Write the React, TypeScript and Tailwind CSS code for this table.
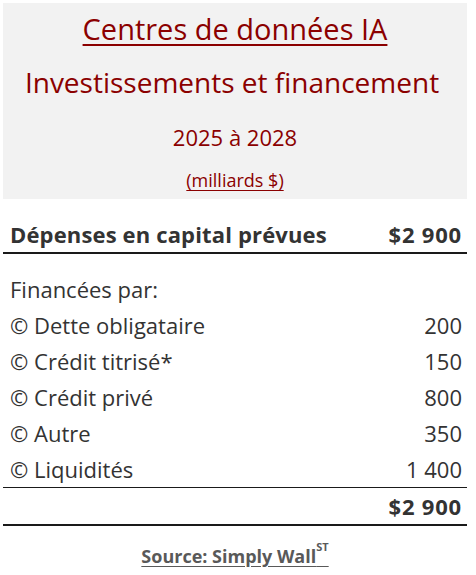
import React from 'react';

const rows = [
  { label: 'Dette obligataire', value: '200' },
  { label: 'Crédit titrisé*', value: '150' },
  { label: 'Crédit privé', value: '800' },
  { label: 'Autre', value: '350' },
  { label: 'Liquidités', value: '1 400' },
];

export default function App() {
  return (
    <div
      className="w-[476px] h-[575px] bg-white px-[3px] pt-[3px] text-[#333333]"
      style={{ fontFamily: '"Open Sans", "Noto Sans", sans-serif' }}
    >
      {/* Title block */}
      <div className="w-[464px] h-[196px] bg-[#f2f2f2] flex flex-col items-center text-[#8b0000]">
        <h1 className="mt-[6px] text-[29px] leading-[40px] underline underline-offset-[4px] decoration-[2px]">
          Centres de données IA
        </h1>
        <h2 className="mt-[13px] -ml-[6px] text-[28px] leading-[40px]">Investissements et financement</h2>
        <p className="mt-[20px] text-[22px] leading-[30px]">2025 à 2028</p>
        <p className="mt-[16px] text-[18px] leading-[24px] underline underline-offset-[3px]">
          (milliards $)
        </p>
      </div>

      {/* Capex */}
      <div className="w-[464px] mt-[20px] flex justify-between pl-[7px] pr-[5px] pb-[3px] border-b-2 border-[#1a1a1a] text-[22px] font-bold leading-[30px]">
        <span className="tracking-[0.15px]">Dépenses en capital prévues</span>
        <span className="tracking-[0.8px]">$2 900</span>
      </div>

      {/* Financing */}
      <div className="w-[464px] mt-[17px] border-b border-[#1a1a1a]">
        <div className="pl-[7px] text-[22px] leading-[36px]">Financées par:</div>
        {rows.map((r) => (
          <div key={r.label} className="flex justify-between pl-[7px] pr-[5px] text-[22px] leading-[36px]">
            <span>© {r.label}</span>
            <span>{r.value}</span>
          </div>
        ))}
      </div>

      <div className="w-[464px] flex justify-end pr-[5px] border-b-2 border-[#1a1a1a] text-[22px] font-bold leading-[36px] tracking-[0.8px]">
        $2 900
      </div>

      <div className="w-[464px] mt-[18px] flex justify-center">
        <span className="text-[18px] font-bold text-[#595959] underline underline-offset-[3px] leading-[24px]">
          Source: Simply Wall<sup className="text-[11px] align-super">ST</sup>
        </span>
      </div>
    </div>
  );
}
